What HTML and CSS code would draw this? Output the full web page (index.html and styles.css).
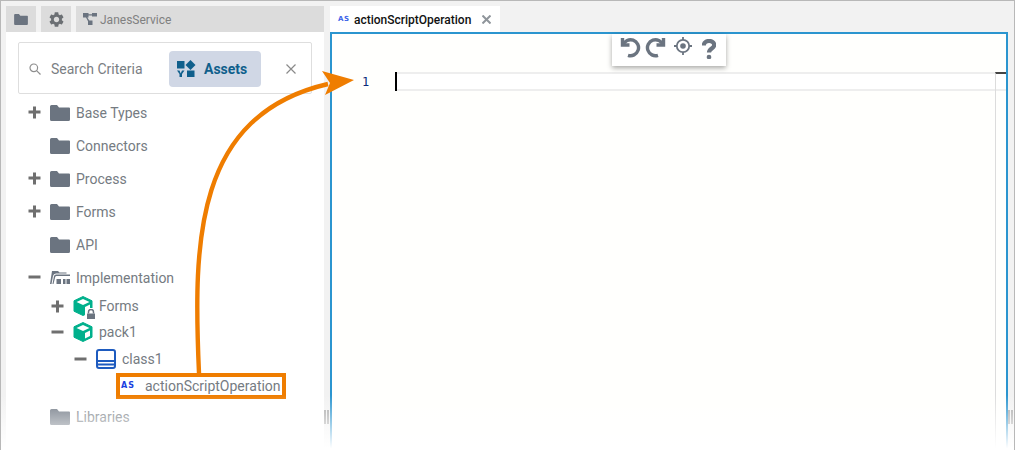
FILE: index.html
```html
<!DOCTYPE html>
<html lang="en">
<head>
<meta charset="utf-8">
<title>actionScriptOperation</title>
<link rel="stylesheet" href="styles.css">
</head>
<body>
<svg class="defs" width="0" height="0" aria-hidden="true">
  <symbol id="folder" viewBox="0 0 20 16"><path d="M0 1.500Q0 0 1.500 0H7L9 2.500H19Q20 2.500 20 3.500V14.500Q20 16 18.500 16H1.500Q0 16 0 14.500Z"/></symbol>
  <symbol id="cube" viewBox="0 0 20 20"><path d="M10 .5L19 4.800V15.200L10 19.500L1 15.200V4.800Z" fill="#00b08c" stroke="#00b08c" stroke-linejoin="round"/><path d="M10 3L16.500 6L10 9L3.500 6Z" fill="#fff"/><path d="M12 11L17 8.500V14L12 16.500Z" fill="#fff"/></symbol>
</svg>
<div class="app">
  <section class="left">
    <div class="toptabs">
      <div class="ttab"><svg class="i-top-folder"><use href="#folder"/></svg></div>
      <div class="ttab"><svg class="i-gear" viewBox="2 2 20 20"><path d="M19.14 12.94c.04-.3.06-.61.06-.94s-.02-.64-.07-.94l2.03-1.58c.18-.14.23-.41.12-.61l-1.92-3.32c-.12-.22-.37-.29-.59-.22l-2.39.96c-.5-.38-1.03-.7-1.62-.94L14.400 2.810c-.04-.24-.24-.41-.48-.41h-3.840c-.24 0-.43.17-.47.41L9.250 5.350c-.59.24-1.130.57-1.620.94L5.240 5.330c-.22-.08-.47 0-.59.22L2.740 8.870c-.12.21-.08.47.12.61l2.030 1.580c-.05.3-.09.63-.09.94s.02.64.07.94l-2.030 1.580c-.18.14-.23.41-.12.61l1.920 3.320c.12.22.37.29.59.22l2.390-.96c.5.38 1.030.7 1.620.94l.36 2.540c.05.24.24.41.48.41h3.840c.24 0 .44-.17.47-.41l.36-2.540c.59-.24 1.130-.56 1.620-.94l2.390.96c.22.08.47 0 .59-.22l1.920-3.320c.12-.22.07-.47-.12-.61zM12 15.600c-1.980 0-3.600-1.620-3.600-3.600s1.620-3.600 3.600-3.600 3.600 1.620 3.600 3.600-1.620 3.600-3.600 3.600z"/></svg></div>
      <div class="ttab ttab-wide">
        <svg class="i-service" viewBox="0 0 14 12"><path d="M0 0H5.500V1.200H9V0H14V3.500H9V2.400H5.500V4.500H4.300L6.300 7.500H9.500V12H5V8.200L3 4.500H0Z"/></svg>
        <span>JanesService</span>
      </div>
    </div>
    <div class="panel">
      <div class="search">
        <svg class="i-search" viewBox="0 0 12 12"><circle cx="4.800" cy="4.800" r="3.800"/><path d="M7.600 7.600L11.500 11.500"/></svg>
        <span class="search-label">Search Criteria</span>
        <div class="assets">
          <svg class="i-assets" viewBox="0 0 18 16"><path d="M0 0H7.500V7.500H0Z"/><path d="M13.500 -1L18.500 4L13.500 9L8.500 4Z"/><path d="M10 9.500H17.500V16H10Z"/><path d="M0 9.500H2.500L3.700 12.500L5 9.500H7.500L5 13V16H2.500V13Z"/></svg>
          <span>Assets</span>
        </div>
        <svg class="i-close" viewBox="0 0 10 10"><path d="M.5 .5L9.500 9.500M9.500 .5L.5 9.500"/></svg>
      </div>
      <ul class="tree">
        <li class="row"><svg class="tg"><path d="M0 5.500H12M6 0V12" transform="translate(.5 .5)"/></svg><svg class="folder"><use href="#folder"/></svg><span>Base Types</span></li>
        <li class="row"><span class="tg-gap"></span><svg class="folder"><use href="#folder"/></svg><span>Connectors</span></li>
        <li class="row"><svg class="tg"><path d="M0 5.500H12M6 0V12" transform="translate(.5 .5)"/></svg><svg class="folder"><use href="#folder"/></svg><span>Process</span></li>
        <li class="row"><svg class="tg"><path d="M0 5.500H12M6 0V12" transform="translate(.5 .5)"/></svg><svg class="folder"><use href="#folder"/></svg><span>Forms</span></li>
        <li class="row"><span class="tg-gap"></span><svg class="folder"><use href="#folder"/></svg><span>API</span></li>
        <li class="row"><svg class="tg"><path d="M0 5.500H12" transform="translate(.5 .5)"/></svg>
          <svg class="folder-open" viewBox="0 0 20 13"><path d="M0 13L2 0H8L9.500 1.500H16.500V2.500H6Q3.500 2.500 3 5L1.500 13Z"/><path d="M4 5Q4.500 3.500 6 3.500H20V5H6.500Q5.500 5 5.200 6L3.500 13H2.500Z"/><path d="M6.500 8H11V13H6.500ZM13 8H15.500V13H13ZM16.500 8H20V13H16.500Z"/></svg>
          <span>Implementation</span></li>
        <li class="row sub sub-first"><svg class="tg"><path d="M0 5.500H12M6 0V12" transform="translate(.5 .5)"/></svg>
          <span class="cube-wrap"><svg class="cube"><use href="#cube"/></svg>
            <svg class="lock" viewBox="0 0 10 10"><path d="M2.500 4.500V3A2.500 2.500 0 0 1 7.500 3V4.500" fill="none" stroke="#6b7480" stroke-width="1.500"/><path d="M1 4.500H9V10H1Z" fill="#6b7480"/></svg></span>
          <span>Forms</span></li>
        <li class="row sub"><svg class="tg"><path d="M0 5.500H12" transform="translate(.5 .5)"/></svg><svg class="cube"><use href="#cube"/></svg><span>pack1</span></li>
        <li class="row sub2"><svg class="tg"><path d="M0 5.500H12" transform="translate(.5 .5)"/></svg>
          <svg class="class-ic" viewBox="0 0 20 20"><rect x="1" y="1" width="18" height="18" rx="2"/><path d="M1 12H19M1 15.500H19"/></svg>
          <span>class1</span></li>
        <li class="row op"><span class="as">AS</span><span>actionScriptOperation</span></li>
        <li class="row libs"><span class="tg-gap"></span><svg class="folder"><use href="#folder"/></svg><span>Libraries</span></li>
      </ul>
    </div>
  </section>
  <div class="split"><i></i><i></i></div>
  <section class="right">
    <div class="etabs">
      <div class="etab"><span class="as as-tab">AS</span><span class="etab-name">actionScriptOperation</span>
        <svg class="i-tabclose" viewBox="0 0 9 9"><path d="M.5 .5L8.500 8.500M8.500 .5L.5 8.500"/></svg></div>
    </div>
    <div class="editor">
      <div class="tools">
        <svg class="tool" viewBox="0 0 22 22"><path d="M3.500 2V9H10.500"/><path d="M4 9A8 8 0 1 1 9 19.300"/></svg>
        <svg class="tool" viewBox="0 0 22 22"><path d="M18.500 2V9H11.500"/><path d="M18 9A8 8 0 1 0 13 19.300"/></svg>
        <svg class="tool tool-target" viewBox="0 0 18 18"><circle cx="9" cy="9" r="6.200"/><circle class="dot" cx="9" cy="9" r="2.800"/><path d="M9 0V3M9 15V18M0 9H3M15 9H18"/></svg>
        <svg class="tool tool-help" viewBox="0 0 14 20"><path d="M1.800 6.500C1.800 .5 12.200 .5 12.200 6C12.200 9.500 7 9.500 7 13.500"/><circle class="dot" cx="7" cy="18" r="2.300"/></svg>
      </div>
      <div class="code-line">
        <span class="ln">1</span>
        <span class="caret"></span>
        <span class="band"></span>
      </div>
      <div class="ruler"></div>
    </div>
  </section>
  <div class="split split-right"><i></i><i></i></div>
  <svg class="arrow" width="1015" height="450" viewBox="0 0 1015 450" aria-hidden="true">
    <path class="arrow-line" d="M199 373C193 240 195 115 328 84"/>
    <path class="arrow-head" d="M322 71L354 80L325 95L330 83Z"/>
  </svg>
  <div class="fade"></div>
</div>
</body>
</html>
```
FILE: styles.css
```css
* { box-sizing: border-box; }
html, body { margin: 0; padding: 0; height: 100%; }
body { font-family: Roboto, "Liberation Sans", sans-serif; font-size: 14px; color: #757b82; background: #fff; overflow: hidden; }
.defs { position: absolute; }
.app { position: relative; width: 1015px; height: 450px; display: flex; padding: 5px 0 0 5px; background: #f2f2f2; border-top: 1px solid #b8b8b8; border-left: 1px solid #b8b8b8; border-right: 1px solid #b8b8b8; overflow: hidden; }

.left { width: 318px; flex: none; display: flex; flex-direction: column; }
.toptabs { display: flex; gap: 5px; height: 26px; }
.ttab { width: 30px; background: #dcdcdc; display: flex; align-items: center; justify-content: center; }
.ttab-wide { flex: 1; justify-content: flex-start; padding: 1px 0 0 7px; gap: 3px; font-size: 12px; color: #808080; }
.i-top-folder { width: 14px; height: 11px; fill: #6b7480; }
.i-gear { width: 15px; height: 15px; fill: #6b6f73; }
.i-service { width: 14px; height: 12px; fill: #6b7480; margin-top: -1px; }

.panel { flex: 1; background: #fff; padding-top: 10px; }
.search { margin-left: 12px; width: 294px; height: 52px; border: 1px solid #dedede; border-radius: 2px; display: flex; align-items: center; padding: 2px 0 0 10px; }
.i-search { width: 12px; height: 12px; fill: none; stroke: #8e8e8e; stroke-width: 1.200; }
.search-label { margin-left: 10px; width: 118px; color: #7a7e83; }
.assets { width: 92px; height: 36px; border-radius: 4px; background: #d0d7e5; display: flex; align-items: center; padding-left: 8px; gap: 9px; font-weight: 700; color: #0f5f8c; }
.i-assets { width: 18px; height: 16px; fill: #0f5f8c; overflow: visible; }
.i-close { width: 10px; height: 10px; margin-left: 25px; fill: none; stroke: #8a8a8a; stroke-width: 1.200; }

.tree { list-style: none; margin: 2px 0 0; padding: 0; }
.row { height: 33px; display: flex; align-items: center; padding-left: 22px; }
.tg { width: 13px; height: 13px; flex: none; fill: none; stroke: #6f6f6f; stroke-width: 3; }
.tg-gap { width: 13px; flex: none; }
.folder { width: 20px; height: 16px; margin: 0 6px 0 9px; fill: #6b7480; flex: none; }
.folder-open { width: 20px; height: 13px; margin: 0 6px 0 9px; fill: #6b7480; flex: none; }
.sub { height: 26px; padding-left: 45px; }
.sub-first { margin-top: -1px; }
.sub .cube, .cube-wrap { margin: 0 6px 0 9px; }
.cube { width: 20px; height: 20px; flex: none; }
.cube-wrap { position: relative; width: 20px; height: 20px; flex: none; }
.cube-wrap .cube { margin: 0; display: block; }
.lock { position: absolute; right: -3px; bottom: -3px; width: 10px; height: 10px; background: #fff; outline: 1px solid #fff; }
.sub2 { height: 26px; margin-top: 1px; padding-left: 68px; }
.class-ic { width: 20px; height: 20px; margin: 0 6px 0 9px; flex: none; fill: #fff; stroke: #1e5bbf; stroke-width: 2; }
.op { height: 26px; margin: 1px 0 0 110px; width: 170px; border: 4px solid #ef7d00; padding-left: 1px; background: #fff; }
.as { width: 14px; margin-right: 10px; flex: none; font-family: "DejaVu Sans", sans-serif; font-weight: 700; font-size: 8px; color: #1a3fe0; letter-spacing: 1px; line-height: 1; }
.libs { margin-top: 1px; }

.split { width: 6px; flex: none; display: flex; gap: 1px; justify-content: flex-start; align-items: flex-end; padding-bottom: 26px; }
.split i { width: 2px; height: 14px; background: #a8a8a8; }
.split-right { padding-left: 0; }

.right { flex: 1; display: flex; flex-direction: column; min-width: 0; }
.etabs { height: 26px; display: flex; }
.etab { width: 170px; background: #fff; display: flex; align-items: center; padding: 1px 0 0 8px; }
.as-tab { font-size: 7px; width: 10px; margin-right: 6px; color: #3d63e8; letter-spacing: .5px; }
.etab-name { font-size: 12px; font-weight: 500; color: #111; }
.i-tabclose { width: 9px; height: 9px; margin-left: 11px; margin-top: -1px; fill: none; stroke: #8f959b; stroke-width: 2; }

.editor { position: relative; flex: 1; border: 2px solid #2b95cf; border-bottom: 0; background: #fffffd; padding-top: 38px; }
.tools { position: absolute; top: 0; left: 50%; transform: translateX(-50%); width: 114px; height: 32px; background: #fff; box-shadow: 0 2px 5px rgba(0,0,0,.35); display: flex; align-items: flex-start; padding: 2px 0 0 7px; gap: 4px; }
.tool { width: 22px; height: 22px; flex: none; fill: none; stroke: #6b7480; stroke-width: 3.400; }
.tool-target { width: 18px; height: 18px; margin: 1px 0 0 3px; stroke-width: 1.800; }
.tool-help { width: 14px; height: 20px; margin: 3px 0 0 6px; stroke-width: 4.200; }
.dot { fill: #6b7480; stroke: none; }
.code-line { height: 19px; display: flex; align-items: stretch; }
.ln { width: 63px; padding: 1px 0 0 30px; font-family: "DejaVu Sans Mono", "Liberation Mono", monospace; font-size: 12px; line-height: 19px; color: #0b2a7a; }
.caret { width: 2px; background: #000; }
.band { flex: 1; background: #fff; border-top: 2px solid #eee; border-bottom: 2px solid #eee; }
.ruler { position: absolute; top: 38px; right: 0; bottom: 0; width: 11px; border-left: 1px solid #dcdcdc; border-top: 2px solid #444; }

.arrow { position: absolute; left: -1px; top: -1px; pointer-events: none; }
.arrow-line { fill: none; stroke: #ef7d00; stroke-width: 4.400; }
.arrow-head { fill: #ef7d00; }
.fade { position: absolute; left: -1px; right: -1px; bottom: 0; height: 55px; background: linear-gradient(to bottom, rgba(255,255,255,0), #fff 97%); }
```
